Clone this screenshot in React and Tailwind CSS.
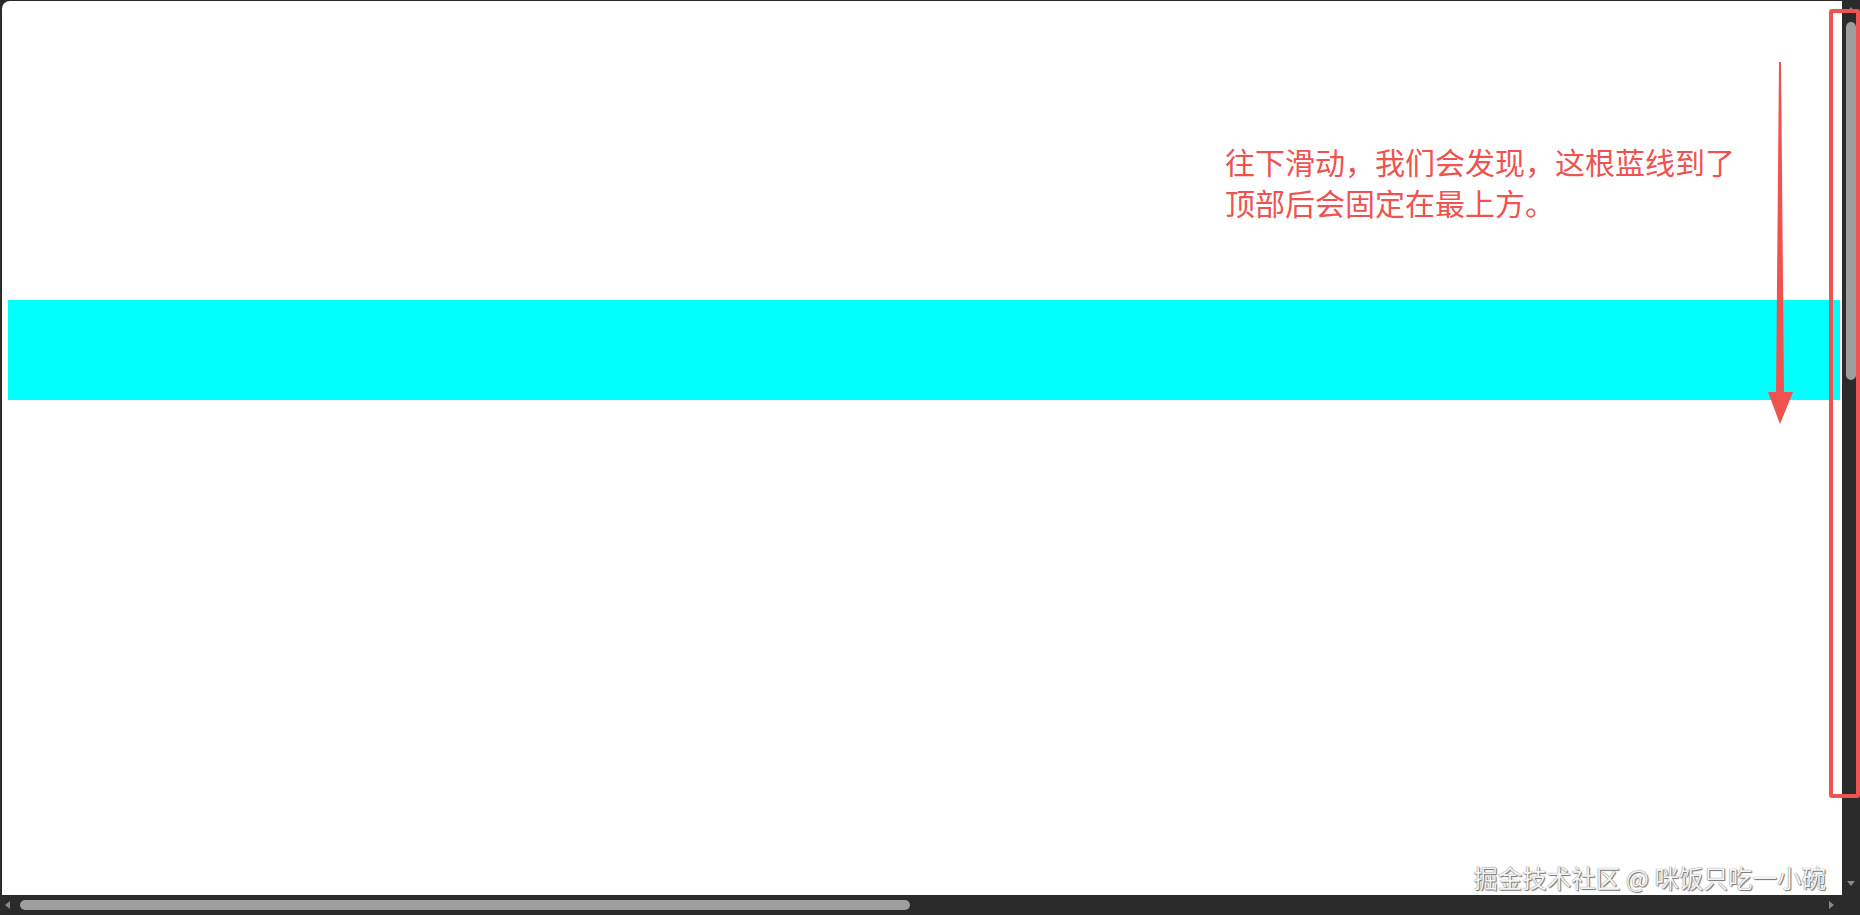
// Sticky bar demo screenshot: white page with a cyan bar, red annotation, browser scrollbars
const RED = 'text-[#f0524f]';

function Annotation() {
  return (
    <div
      className={`absolute left-[1223px] top-[140px] text-[30px] leading-[41px] ${RED}`}
      style={{ fontFamily: '"Noto Sans CJK SC", "Noto Sans", sans-serif' }}
    >
      <p>往下滑动，我们会发现，这根蓝线到了</p>
      <p>顶部后会固定在最上方。</p>
    </div>
  );
}

function DownArrow() {
  return (
    <svg className="absolute left-[1764px] top-[59px]" width="32" height="368" viewBox="0 0 32 368">
      <polygon points="13,2 15,2 18,336 10,336" fill="#f0524f" />
      <polygon points="2,332 27,332 14,364" fill="#f0524f" />
    </svg>
  );
}

function VScrollbar() {
  return (
    <div className="w-[18px] flex flex-col items-center bg-[#2b2b2b]">
      <div className="mt-[6px] w-0 h-0 border-l-[4px] border-r-[4px] border-b-[5px] border-l-transparent border-r-transparent border-b-[#8a8a8a]" />
      <div className="mt-[10px] w-[10px] h-[358px] rounded-full bg-[#9e9e9e]" />
      <div className="flex-1" />
      <div className="mb-[9px] w-0 h-0 border-l-[4px] border-r-[4px] border-t-[5px] border-l-transparent border-r-transparent border-t-[#8a8a8a]" />
    </div>
  );
}

function HScrollbar() {
  return (
    <div className="h-[20px] flex items-center bg-[#2b2b2b]">
      <div className="ml-[5px] w-0 h-0 border-t-[4px] border-b-[4px] border-r-[5px] border-t-transparent border-b-transparent border-r-[#8a8a8a]" />
      <div className="ml-[10px] w-[890px] h-[10px] rounded-full bg-[#9e9e9e]" />
      <div className="flex-1" />
      <div className="mr-[26px] w-0 h-0 border-t-[4px] border-b-[4px] border-l-[5px] border-t-transparent border-b-transparent border-l-[#8a8a8a]" />
    </div>
  );
}

export default function App() {
  return (
    <div className="relative w-[1860px] h-[915px] overflow-hidden bg-[#2b2b2b] flex flex-col">
      <div className="flex flex-1 min-h-0 pt-px">
        {/* page viewport */}
        <div className="relative flex-1 ml-[2px] bg-white rounded-tl-[8px]">
          <div className="pt-[299px] pl-[6px] pr-[2px]">
            <div className="h-[100px] bg-[#00ffff]" />
          </div>
          <Annotation />
          <DownArrow />
          <div
            className="absolute right-[16px] bottom-[2px] text-[24.5px] leading-[30px] text-[#f4f4f4]"
            style={{
              fontFamily: '"Noto Sans CJK SC", "Noto Sans", sans-serif',
              textShadow: '0 0 1px #555, 1px 1px 1px #777',
            }}
          >
            掘金技术社区 @ 咪饭只吃一小碗
          </div>
        </div>
        <VScrollbar />
      </div>
      <HScrollbar />

      {/* red highlight box round the scrollbar */}
      <div className="absolute left-[1829px] top-[9px] w-[31px] h-[789px] border-[4px] border-[#f0524f] rounded-[3px]" />
    </div>
  );
}
